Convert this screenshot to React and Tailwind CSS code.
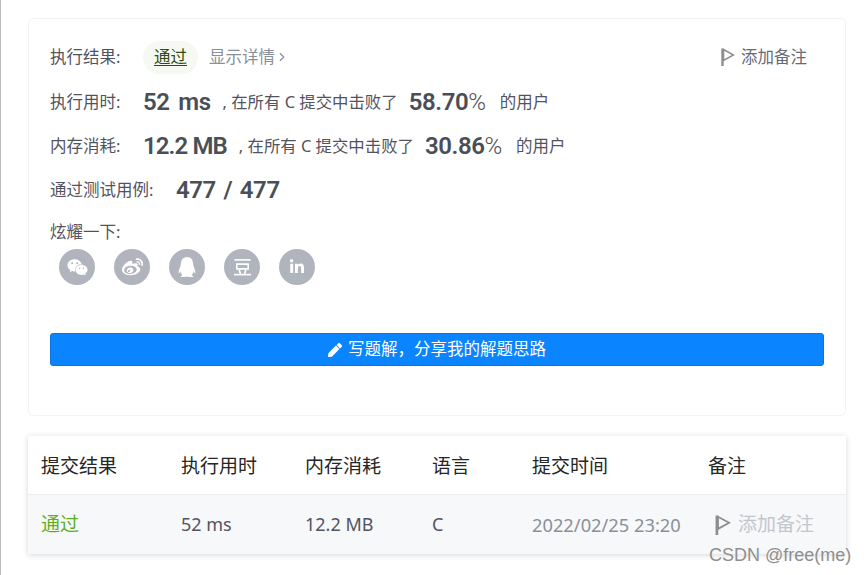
import { ChevronRight } from "lucide-react";
import { FaWeixin, FaWeibo, FaQq, FaLinkedinIn, FaPen } from "react-icons/fa";

const font = "font-['Noto_Sans','Noto_Sans_CJK_SC',sans-serif]";
const number = "font-['Roboto',sans-serif] text-[24px] font-semibold tracking-[-0.4px] text-[#4a4f57] leading-none";

function Flag({ className }) {
  return (
    <svg viewBox="0 0 14 18" className={className} fill="none" stroke="currentColor">
      <path d="M1.5 0.5V18" strokeWidth="2.4" />
      <path d="M2.5 1.5L12.5 7L2.5 12.5Z" strokeWidth="1.6" />
    </svg>
  );
}

function Douban({ className }) {
  return (
    <svg viewBox="0 0 20 20" className={className} fill="none" stroke="currentColor" strokeWidth="1.7">
      <path d="M1.5 2H18.5" />
      <path d="M4 6.5H16V11.5H4Z" />
      <path d="M6.5 12.5L8 17M13.5 12.5L12 17" />
      <path d="M1 17.5H19" />
    </svg>
  );
}

function Stat({ label, value, valueClass, percent, gap }) {
  return (
    <div className="flex items-center h-[44px]">
      <span className="w-[93px] text-[16.5px] text-[#53535f]">{label}</span>
      <span className={`${number} ${valueClass}`}>{value}</span>
      <span className={`${gap} text-[16.4px] text-[#53535f]`}>, 在所有 C 提交中击败了</span>
      <span className={`ml-[11px] ${number}`}>
        {percent}
        <span className="font-light">%</span>
      </span>
      <span className="ml-[14px] text-[16.5px] text-[#53535f]">的用户</span>
    </div>
  );
}

const shares = [
  { Icon: FaWeixin, size: "w-[21px] h-[21px]" },
  { Icon: FaWeibo, size: "w-[21px] h-[21px]" },
  { Icon: FaQq, size: "w-[20px] h-[20px]" },
  { Icon: Douban, size: "w-[19px] h-[19px]" },
  { Icon: FaLinkedinIn, size: "w-[16px] h-[16px]" },
];

export default function App() {
  return (
    <div className={`${font} relative w-[867px] h-[575px] overflow-hidden bg-white border-l-[1px] border-[#bdbdbd] pl-[27px] pr-[21px] pt-[18px]`}>
      <div className="h-[398px] rounded-[5px] border border-[#f2f3f5] px-[21px] pt-[19px]">
        <div className="flex items-center h-[38px]">
          <span className="w-[93px] text-[16.5px] text-[#53535f]">执行结果:</span>
          <span className="h-[33px] w-[55px] rounded-full bg-[#f5f9f1] flex items-center justify-center text-[16.5px] text-[#2f4a12] underline underline-offset-2">通过</span>
          <span className="ml-[11px] text-[16.5px] text-[#8a9099]">显示详情</span>
          <ChevronRight className="w-[14px] h-[14px] text-[#8a9099]" />
          <span className="ml-auto mr-[17px] flex items-center text-[16.5px] text-[#666b73]">
            <Flag className="w-[14px] h-[18px] mr-[6px] text-[#8e8e8e]" />
            添加备注
          </span>
        </div>
        <div className="mt-[4px]">
          <Stat label="执行用时:" value="52 ms" valueClass="[word-spacing:3px]" percent="58.70" gap="ml-[12px]" />
          <Stat label="内存消耗:" value="12.2 MB" valueClass="tracking-[-0.9px]" percent="30.86" gap="ml-[12px]" />
          <div className="flex items-center h-[44px]">
            <span className="w-[126px] text-[16.5px] text-[#53535f]">通过测试用例:</span>
            <span className={`${number} [word-spacing:2px]`}>477 / 477</span>
          </div>
        </div>
        <div className="mt-[8px] text-[16.5px] text-[#53535f] leading-[24px]">炫耀一下:</div>
        <div className="flex gap-[19px] pl-[9px] mt-[5px]">
          {shares.map(({ Icon, size }, i) => (
            <span key={i} className="w-[36px] h-[36px] rounded-full bg-[#b0b4bc] flex items-center justify-center text-white">
              <Icon className={size} />
            </span>
          ))}
        </div>
        <button className="mt-[48px] w-full h-[33px] rounded-[3px] bg-[#0a84ff] border border-[#0a74dd] text-white text-[16.5px] flex items-center justify-center">
          <FaPen className="w-[14px] h-[14px] mr-[6px]" />
          {"写题解\uFF0C分享我的解题思路"}
        </button>
      </div>

      <div className="mt-[20px] h-[118px] shadow-[0_1px_6px_rgba(0,0,0,0.16)]">
        <div className="grid grid-cols-[140px_124px_127px_100px_176px_1fr] h-[59px] items-center pl-[13px] pt-[2px] text-[19px] text-[#262626] border-b border-[#eceef0]">
          <span>提交结果</span>
          <span>执行用时</span>
          <span>内存消耗</span>
          <span>语言</span>
          <span>提交时间</span>
          <span>备注</span>
        </div>
        <div className="grid grid-cols-[140px_124px_127px_100px_176px_1fr] h-[59px] items-center pl-[13px] bg-[#f7f8fa] text-[18px] text-[#53535f]">
          <span className="text-[19px] text-[#5cb01c]">通过</span>
          <span>52 ms</span>
          <span>12.2 MB</span>
          <span>C</span>
          <span className="text-[18.3px] text-[#8a9099]">2022/02/25 23:20</span>
          <span className="flex items-center pl-[7px] text-[19px] text-[#c3c7cd]">
            <Flag className="w-[16px] h-[20px] mr-[7px] text-[#8e8e8e]" />
            添加备注
          </span>
        </div>
      </div>

      <span className="absolute left-[708px] top-[544px] font-['Liberation_Sans',sans-serif] text-[18px] leading-[22px] text-[#8f8f8f]">CSDN @free(me)</span>
    </div>
  );
}
